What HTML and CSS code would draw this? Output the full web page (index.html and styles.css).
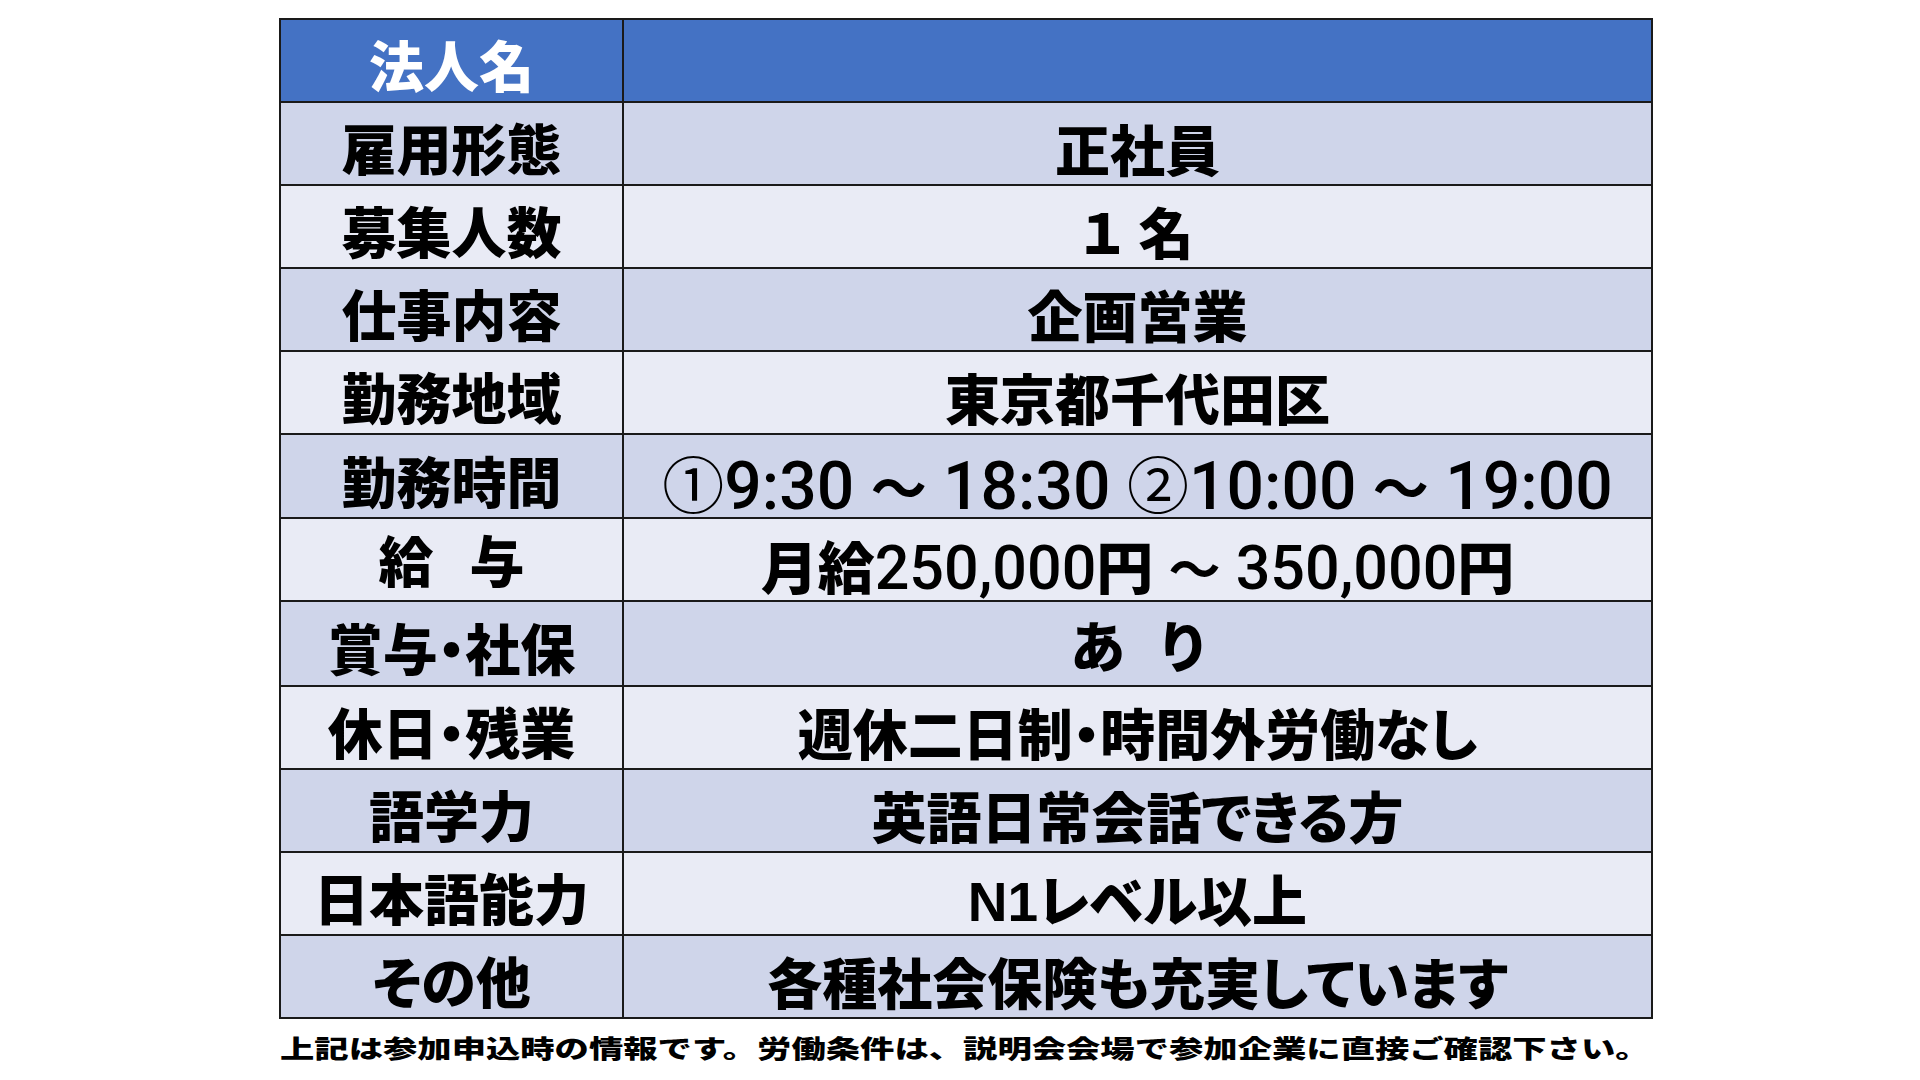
FILE: index.html
```html
<!DOCTYPE html>
<html lang="ja">
<head>
<meta charset="utf-8">
<title>求人情報</title>
<link rel="stylesheet" href="styles.css">
</head>
<body>
<main class="page">
  <table class="info">
    <colgroup>
      <col class="col-label">
      <col class="col-value">
    </colgroup>
    <tr class="head">
      <th class="label">法人名</th>
      <td class="value"></td>
    </tr>
    <tr class="odd">
      <th class="label">雇用形態</th>
      <td class="value">正社員</td>
    </tr>
    <tr class="even">
      <th class="label">募集人数</th>
      <td class="value">１ 名</td>
    </tr>
    <tr class="odd">
      <th class="label">仕事内容</th>
      <td class="value">企画営業</td>
    </tr>
    <tr class="even">
      <th class="label">勤務地域</th>
      <td class="value">東京都千代田区</td>
    </tr>
    <tr class="odd">
      <th class="label">勤務時間</th>
      <td class="value num time"><span class="circ">①</span>9:30 <span class="tilde">～</span> 18:30 <span class="circ">②</span>10:00 <span class="tilde">～</span> 19:00</td>
    </tr>
    <tr class="even">
      <th class="label">給<span class="gap">　</span>与</th>
      <td class="value num pay"><span class="kanji">月給</span>250,000<span class="kanji">円</span> <span class="tilde">～</span> 350,000<span class="kanji">円</span></td>
    </tr>
    <tr class="odd">
      <th class="label">賞与・社保</th>
      <td class="value">あ<span class="gap">　</span>り</td>
    </tr>
    <tr class="even">
      <th class="label">休日・残業</th>
      <td class="value">週休二日制・時間外労働なし</td>
    </tr>
    <tr class="odd">
      <th class="label">語学力</th>
      <td class="value">英語日常会話できる方</td>
    </tr>
    <tr class="even">
      <th class="label">日本語能力</th>
      <td class="value">N1レベル以上</td>
    </tr>
    <tr class="odd">
      <th class="label">その他</th>
      <td class="value">各種社会保険も充実しています</td>
    </tr>
  </table>
  <p class="note"><span class="note-text">上記は参加申込時の情報です。労働条件は、説明会会場で参加企業に直接ご確認下さい。</span></p>
</main>
</body>
</html>
```

FILE: styles.css
```css
html, body {
  margin: 0;
  padding: 0;
  background: #ffffff;
}

.page {
  width: 1920px;
  height: 1080px;
  padding: 18px 0 0 279px;
  box-sizing: border-box;
  overflow: hidden;
}

.info {
  border-collapse: collapse;
  table-layout: fixed;
  width: 1372px;
  border: 2px solid #1a1a1a;
}

.col-label { width: 343px; }
.col-value { width: 1029px; }

.info tr { height: 83px; }

.info th,
.info td {
  border: 2px solid #1a1a1a;
  padding: 0;
  text-align: center;
  vertical-align: middle;
  color: #000000;
  font-feature-settings: "palt";
  white-space: nowrap;
}

.head { background: #4472c4; }
.odd { background: #cfd5ea; }
.even { background: #e9ebf5; }

.label {
  font-family: "Noto Sans CJK JP", sans-serif;
  font-weight: 900;
  font-size: 55px;
  line-height: 60px;
  padding-top: 5px !important;
}

.head .label { color: #ffffff; }

.value {
  font-family: "Liberation Sans", "Noto Sans CJK JP", sans-serif;
  font-weight: 900;
  font-size: 55px;
  line-height: 60px;
  padding-top: 16px !important;
}

.value.num {
  font-family: "Roboto", "Noto Sans CJK JP", sans-serif;
  font-size: 66px;
  font-weight: 500;
  padding-top: 12px !important;
}

.value.time {
  padding-top: 17px !important;
}

.value.pay {
  font-size: 61px;
}

.kanji {
  font-family: "Noto Sans CJK JP", sans-serif;
  font-weight: 900;
  font-size: 57px;
}

.value.num .tilde {
  font-family: "Noto Sans CJK JP", sans-serif;
  font-weight: 700;
  font-size: 56px;
}

.value.pay .tilde {
  font-size: 52px;
}

.circ {
  font-family: "Noto Sans CJK JP", sans-serif;
  font-weight: 400;
  font-size: 62px;
}

.gap {
  font-size: 36px;
}

.note {
  margin: 12px 0 0 1px;
  height: 32px;
  white-space: nowrap;
}

.note-text {
  display: inline-block;
  font-family: "Noto Sans CJK JP", sans-serif;
  font-weight: 900;
  font-size: 25px;
  line-height: 32px;
  color: #000000;
  transform: scaleX(1.373);
  transform-origin: left center;
}
```
